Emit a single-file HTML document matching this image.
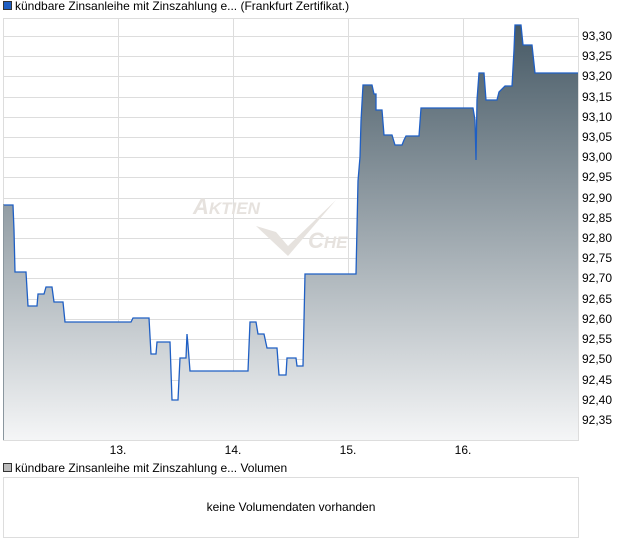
<!DOCTYPE html>
<html><head><style>
body{margin:0;width:620px;height:546px;background:#fff;font-family:"Liberation Sans",sans-serif;overflow:hidden;position:relative}
</style></head><body>
<svg width="620" height="546" style="position:absolute;left:0;top:0" font-family="Liberation Sans, sans-serif">
<defs><linearGradient id="g" x1="0" y1="25" x2="0" y2="441" gradientUnits="userSpaceOnUse">
<stop offset="0" stop-color="#465965"/><stop offset="1" stop-color="#f5f6f7"/></linearGradient></defs>
<rect x="3.5" y="18.5" width="575" height="422" fill="#fff" stroke="#ddd"/>
<g stroke="#ddd" stroke-width="1">
<line x1="3" y1="36.5" x2="578" y2="36.5"/><line x1="3" y1="56.5" x2="578" y2="56.5"/><line x1="3" y1="76.5" x2="578" y2="76.5"/><line x1="3" y1="97.5" x2="578" y2="97.5"/><line x1="3" y1="117.5" x2="578" y2="117.5"/><line x1="3" y1="137.5" x2="578" y2="137.5"/><line x1="3" y1="157.5" x2="578" y2="157.5"/><line x1="3" y1="177.5" x2="578" y2="177.5"/><line x1="3" y1="198.5" x2="578" y2="198.5"/><line x1="3" y1="218.5" x2="578" y2="218.5"/><line x1="3" y1="238.5" x2="578" y2="238.5"/><line x1="3" y1="258.5" x2="578" y2="258.5"/><line x1="3" y1="278.5" x2="578" y2="278.5"/><line x1="3" y1="299.5" x2="578" y2="299.5"/><line x1="3" y1="319.5" x2="578" y2="319.5"/><line x1="3" y1="339.5" x2="578" y2="339.5"/><line x1="3" y1="359.5" x2="578" y2="359.5"/><line x1="3" y1="380.5" x2="578" y2="380.5"/><line x1="3" y1="400.5" x2="578" y2="400.5"/><line x1="3" y1="420.5" x2="578" y2="420.5"/>
<line x1="118.5" y1="18" x2="118.5" y2="441"/><line x1="233.5" y1="18" x2="233.5" y2="441"/><line x1="348.5" y1="18" x2="348.5" y2="441"/><line x1="463.5" y1="18" x2="463.5" y2="441"/>
</g>
<g fill="#e6e2de" font-style="italic" font-weight="bold">
<text x="193" y="214" font-size="22">A<tspan font-size="17">KTIEN</tspan></text>
<text x="308" y="248" font-size="22">C<tspan font-size="17">HE</tspan></text>
<path d="M256 226 L276 232 L288 246 L336 200 L288 256 Z"/>
</g>
<path d="M3 205 L13 205 L14 230 L15 272 L26 272 L28 306 L37 306 L38 294 L44 294 L46 287 L52 287 L54 302 L63 302 L65 322 L131 322 L133 318 L149 318 L151 354 L156 354 L157 342 L170 342 L172 400 L178 400 L180 358 L186 358 L187 334 L188 345 L190 371 L248 371 L250 322 L256 322 L258 334 L264 334 L267 348 L277 348 L279 375 L286 375 L287 358 L296 358 L297 366 L303 366 L305 274 L356 274 L358 181 L360 157 L361 121 L363 85 L372 85 L374 94 L376 94 L376 110 L382 110 L384 135 L392 135 L395 145 L402 145 L404 140 L406 136 L419 136 L421 108 L473 108 L475 120 L476 160 L477 100 L479 73 L484 73 L486 100 L497 100 L499 92 L505 86 L512 86 L514 50 L515 25 L521 25 L523 45 L532 45 L535 73 L578 73 L578 440 L3 440 Z" fill="url(#g)"/>
<path d="M3 205 L13 205 L14 230 L15 272 L26 272 L28 306 L37 306 L38 294 L44 294 L46 287 L52 287 L54 302 L63 302 L65 322 L131 322 L133 318 L149 318 L151 354 L156 354 L157 342 L170 342 L172 400 L178 400 L180 358 L186 358 L187 334 L188 345 L190 371 L248 371 L250 322 L256 322 L258 334 L264 334 L267 348 L277 348 L279 375 L286 375 L287 358 L296 358 L297 366 L303 366 L305 274 L356 274 L358 181 L360 157 L361 121 L363 85 L372 85 L374 94 L376 94 L376 110 L382 110 L384 135 L392 135 L395 145 L402 145 L404 140 L406 136 L419 136 L421 108 L473 108 L475 120 L476 160 L477 100 L479 73 L484 73 L486 100 L497 100 L499 92 L505 86 L512 86 L514 50 L515 25 L521 25 L523 45 L532 45 L535 73 L578 73" fill="none" stroke="#1f5fc4" stroke-width="1.3"/>
<rect x="3" y="204" width="1" height="236" fill="#8a969e"/>
<g font-size="12" fill="#000">
<text x="582" y="40">93,30</text><text x="582" y="60">93,25</text><text x="582" y="80">93,20</text><text x="582" y="101">93,15</text><text x="582" y="121">93,10</text><text x="582" y="141">93,05</text><text x="582" y="161">93,00</text><text x="582" y="181">92,95</text><text x="582" y="202">92,90</text><text x="582" y="222">92,85</text><text x="582" y="242">92,80</text><text x="582" y="262">92,75</text><text x="582" y="282">92,70</text><text x="582" y="303">92,65</text><text x="582" y="323">92,60</text><text x="582" y="343">92,55</text><text x="582" y="363">92,50</text><text x="582" y="384">92,45</text><text x="582" y="404">92,40</text><text x="582" y="424">92,35</text>
<text x="118" y="454" text-anchor="middle">13.</text><text x="233" y="454" text-anchor="middle">14.</text><text x="348" y="454" text-anchor="middle">15.</text><text x="463" y="454" text-anchor="middle">16.</text>
<text x="15" y="10">kündbare Zinsanleihe mit Zinszahlung e... (Frankfurt Zertifikat.)</text>
<text x="15" y="472">kündbare Zinsanleihe mit Zinszahlung e... Volumen</text>
<text x="291" y="511" text-anchor="middle">keine Volumendaten vorhanden</text>
</g>
<rect x="3.5" y="1.5" width="8" height="8" fill="#1f5fc4" stroke="#333"/>
<rect x="3.5" y="463.5" width="8" height="8" fill="#bbb" stroke="#333"/>
<rect x="3.5" y="477.5" width="575" height="60" fill="none" stroke="#ddd"/>
</svg>
</body></html>
